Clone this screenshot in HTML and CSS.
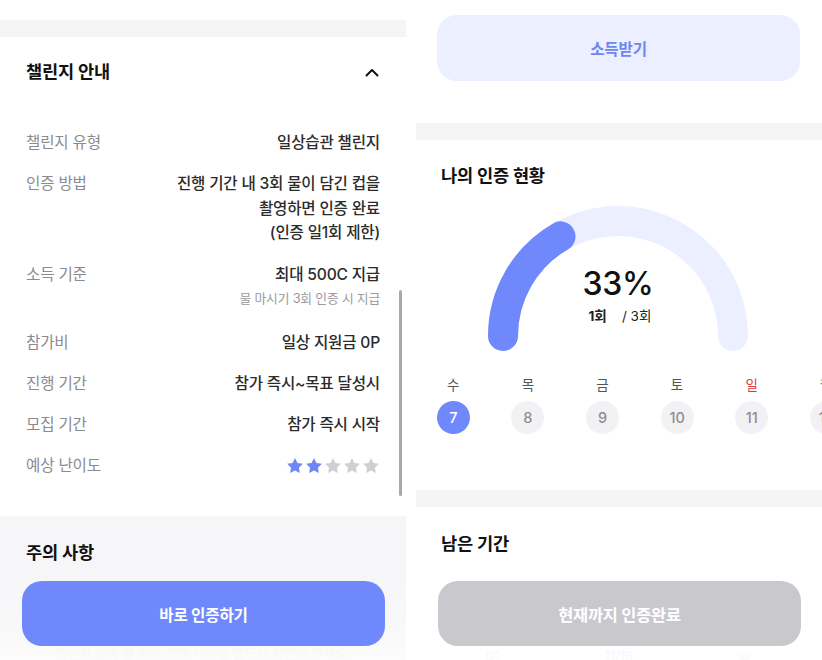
FILE: index.html
```html
<!DOCTYPE html>
<html lang="ko">
<head>
<meta charset="utf-8">
<title>챌린지</title>
<link rel="stylesheet" href="styles.css">
</head>
<body>
<div class="page">
  <div class="screen left">
    <div class="top-space"></div>
    <div class="band"></div>
    <section class="info">
      <div class="info-head">
        <h2 class="title">챌린지 안내</h2>
        <svg class="chevron" width="14" height="9" viewBox="0 0 14 9"><path d="M1.5 7.5 L7 2 L12.5 7.5" fill="none" stroke="#111" stroke-width="2" stroke-linecap="round" stroke-linejoin="round"/></svg>
      </div>
      <div class="rows">
        <div class="row"><span class="label">챌린지 유형</span><span class="value">일상습관 챌린지</span></div>
        <div class="row"><span class="label">인증 방법</span><span class="value multi">진행 기간 내 3회 물이 담긴 컵을<br>촬영하면 인증 완료<br>(인증 일1회 제한)</span></div>
        <div class="row"><span class="label">소득 기준</span><span class="value">최대 500C 지급<span class="sub">물 마시기 3회 인증 시 지급</span></span></div>
        <div class="row"><span class="label">참가비</span><span class="value">일상 지원금 0P</span></div>
        <div class="row"><span class="label">진행 기간</span><span class="value">참가 즉시~목표 달성시</span></div>
        <div class="row"><span class="label">모집 기간</span><span class="value">참가 즉시 시작</span></div>
        <div class="row"><span class="label">예상 난이도</span>
          <span class="stars">
            <svg viewBox="0 0 20 20" class="star on"><path d="M10 1.2l2.7 5.5 6 .9-4.35 4.25 1.03 6L10 15.05 4.62 17.85l1.03-6L1.3 7.6l6-.9z"/></svg>
            <svg viewBox="0 0 20 20" class="star on"><path d="M10 1.2l2.7 5.5 6 .9-4.35 4.25 1.03 6L10 15.05 4.62 17.850l1.03-6L1.3 7.6l6-.9z"/></svg>
            <svg viewBox="0 0 20 20" class="star"><path d="M10 1.2l2.7 5.5 6 .9-4.35 4.25 1.03 6L10 15.05 4.62 17.85l1.03-6L1.3 7.6l6-.9z"/></svg>
            <svg viewBox="0 0 20 20" class="star"><path d="M10 1.2l2.7 5.5 6 .9-4.35 4.25 1.03 6L10 15.05 4.62 17.85l1.03-6L1.3 7.6l6-.9z"/></svg>
            <svg viewBox="0 0 20 20" class="star"><path d="M10 1.2l2.7 5.5 6 .9-4.35 4.25 1.03 6L10 15.05 4.62 17.85l1.03-6L1.3 7.6l6-.9z"/></svg>
          </span>
        </div>
      </div>
    </section>
    <section class="notice">
      <h2 class="title">주의 사항</h2>
      <p class="ghost">챌린지 참여 전 아래 주의 사항을 반드시 확인해 주세요.</p>
    </section>
    <div class="scrollbar"></div>
    <div class="bottom-bar">
      <button class="cta">바로 인증하기</button>
    </div>
  </div>

  <div class="screen right">
    <div class="claim-wrap"><button class="claim">소득받기</button></div>
    <div class="band"></div>
    <section class="status">
      <h2 class="title">나의 인증 현황</h2>
      <div class="gauge">
        <svg width="260" height="145" viewBox="0 0 260 145">
          <path d="M15 130 A115 115 0 0 1 245 130" fill="none" stroke="#ebefff" stroke-width="30" stroke-linecap="round"/>
          <path d="M15 130 A115 115 0 0 1 72.5 30.4" fill="none" stroke="#6f89fd" stroke-width="30" stroke-linecap="round"/>
        </svg>
        <div class="gauge-text">
          <div class="pct">33%</div>
          <div class="count"><b>1회</b><span>/ 3회</span></div>
        </div>
      </div>
      <div class="week">
        <div class="day"><span class="dname">수</span><span class="dnum active">7</span></div>
        <div class="day"><span class="dname">목</span><span class="dnum">8</span></div>
        <div class="day"><span class="dname">금</span><span class="dnum">9</span></div>
        <div class="day"><span class="dname">토</span><span class="dnum">10</span></div>
        <div class="day"><span class="dname sun">일</span><span class="dnum">11</span></div>
        <div class="day"><span class="dname">월</span><span class="dnum">12</span></div>
      </div>
    </section>
    <div class="band"></div>
    <section class="remain">
      <h2 class="title">남은 기간</h2>
      <div class="ghost-row"><span>01</span><span>11/16</span><span>일</span></div>
    </section>
    <div class="bottom-bar">
      <button class="done">현재까지 인증완료</button>
    </div>
  </div>
</div>
</body>
</html>
```

FILE: styles.css
```css
* { box-sizing: border-box; }
html, body { margin: 0; padding: 0; background: #fff; }
body {
  font-family: Inter, "Noto Sans CJK KR", sans-serif;
  color: #111;
  width: 822px;
  height: 660px;
  overflow: hidden;
}
.page {
  display: flex;
  gap: 10px;
  width: 822px;
  height: 660px;
}
.screen {
  position: relative;
  width: 406px;
  height: 660px;
  overflow: hidden;
  background: #fff;
  display: flex;
  flex-direction: column;
}
.top-space { height: 20px; flex: none; }
.band { height: 17px; background: #f5f5f7; flex: none; }

.title {
  margin: 0;
  font-size: 17.6px;
  line-height: 24px;
  font-weight: 700;
  color: #111;
  letter-spacing: -0.2px;
}

/* left info */
.info { padding: 0 26px 38px; flex: none; }
.info-head {
  height: 70px;
  display: flex;
  align-items: center;
  justify-content: space-between;
}
.chevron { margin-right: 1px; }
.rows {
  padding-top: 24px;
  display: flex;
  flex-direction: column;
  gap: 17px;
}
.row {
  display: flex;
  justify-content: space-between;
  align-items: flex-start;
  font-size: 15.6px;
  line-height: 24px;
  letter-spacing: -0.2px;
}
.label { color: #8b8b8f; font-weight: 400; }
.value {
  color: #2b2b2b;
  font-weight: 500;
  text-align: right;
  display: flex;
  flex-direction: column;
  align-items: flex-end;
}
.value.multi { display: block; line-height: 24.7px; }
.sub {
  font-size: 12.8px;
  line-height: 20px;
  margin-top: 2px;
  margin-bottom: 5px;
  color: #9a9a9e;
  font-weight: 400;
}
.stars { display: flex; gap: 1px; padding-top: 3px; }
.star { width: 18px; height: 18px; fill: #cfcfd3; }
.star.on { fill: #6f87f6; }

.notice {
  flex: 1;
  background: #f6f6f8;
  padding: 25px 26px 0;
}
.ghost {
  margin: 78px 0 0;
  font-size: 13px;
  color: #ededf0;
  text-align: center;
}
.scrollbar {
  position: absolute;
  left: 399px;
  top: 290px;
  width: 3px;
  height: 206px;
  background: #a9a9ad;
  border-radius: 2px;
}
.bottom-bar {
  position: absolute;
  left: 0;
  right: 0;
  bottom: 0;
  height: 90px;
  padding: 11px 21px 14px 22px;
  background: linear-gradient(to bottom, rgba(255,255,255,0) 0%, rgba(255,255,255,0.35) 70%, rgba(255,255,255,0.7) 100%);
}
.cta, .done, .claim {
  display: block;
  width: 100%;
  height: 65px;
  border: none;
  border-radius: 20px;
  font-family: inherit;
  font-size: 15.6px;
  font-weight: 700;
  letter-spacing: -0.2px;
  color: #fff;
}
.cta { background: #6f89fc; }
.done { background: #c9c9cd; font-size: 16.4px; }

/* right */
.claim-wrap { padding: 15px 22px 42px 21px; flex: none; }
.claim {
  height: 66px;
  background: #ebefff;
  color: #6f86ef;
}
.status { padding: 24px 0 56px; flex: none; }
.status .title, .remain .title { padding-left: 25px; }
.gauge {
  position: relative;
  width: 260px;
  height: 145px;
  margin: 18px auto 0;
  left: -1px;
}
.gauge svg { display: block; }
.gauge-text {
  position: absolute;
  left: 0;
  right: 0;
  top: 58px;
  text-align: center;
}
.pct {
  font-size: 32px;
  line-height: 40px;
  font-weight: 500;
  color: #111;
  letter-spacing: -0.3px;
}
.count {
  margin-top: 2px;
  font-size: 13.6px;
  line-height: 20px;
  color: #222;
  padding-left: 4px;
}
.count b { font-weight: 700; margin-right: 15px; }
.week {
  display: flex;
  margin-top: 25px;
}
.day {
  flex: none;
  width: 74.6px;
  display: flex;
  flex-direction: column;
  align-items: center;
}
.dname {
  font-size: 13.5px;
  line-height: 18px;
  color: #555;
}
.dname.sun { color: #e0373b; }
.dnum {
  margin-top: 7px;
  width: 33px;
  height: 33px;
  border-radius: 50%;
  background: #f2f2f5;
  color: #8e8e93;
  font-size: 14.5px;
  font-weight: 500;
  display: flex;
  align-items: center;
  justify-content: center;
}
.dnum.active { background: #6f89fc; color: #fff; }
.remain { flex: 1; padding-top: 25px; }
.ghost-row {
  display: flex;
  justify-content: space-between;
  margin-top: 92px;
  padding: 0 72px 0 70px;
  font-size: 13px;
  color: #ececf0;
}
```
